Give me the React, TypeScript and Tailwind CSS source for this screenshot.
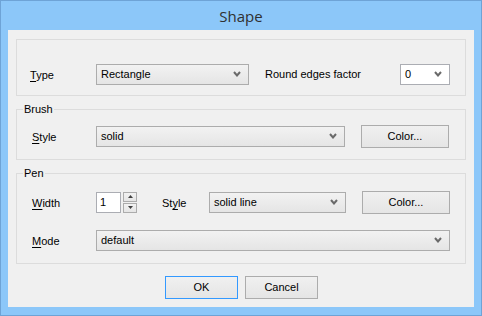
import React from 'react';

const font = { fontFamily: '"Liberation Sans", Arial, sans-serif' };

const Chevron = () => (
  <svg width="8" height="6" viewBox="0 0 8 6" className="shrink-0">
    <polyline points="1,1 4,4.5 7,1" fill="none" stroke="#6a6a6a" strokeWidth="2" />
  </svg>
);

const Combo = ({ value, width, white = false }: { value: string; width: string; white?: boolean }) => (
  <div
    className={`${width} h-[21px] flex items-center justify-between pl-[4px] pr-[7px] border text-[11px] text-black ${
      white ? 'bg-white border-[#abadb3]' : 'bg-gradient-to-b from-[#f2f2f2] to-[#e5e5e5] border-[#acacac]'
    }`}
  >
    <span>{value}</span>
    <Chevron />
  </div>
);

const Button = ({ label, width, def = false }: { label: string; width: string; def?: boolean }) => (
  <div
    className={`${width} h-[23px] flex items-center justify-center border text-[11px] text-black bg-gradient-to-b from-[#f0f0f0] to-[#e5e5e5] ${
      def ? 'border-[#3399ff]' : 'border-[#acacac]'
    }`}
  >
    {label}
  </div>
);

const Label = ({ pre = '', u, post }: { pre?: string; u: string; post: string }) => (
  <span className="text-[11px] text-black">
    {pre}
    <span className="underline underline-offset-2">{u}</span>
    {post}
  </span>
);

const Group = ({ title, height, children }: { title?: string; height: string; children: React.ReactNode }) => (
  <div className={`relative mx-[8px] ${height} border border-[#dcdcdc]`}>
    {title && (
      <span className="absolute -top-[8px] left-[6px] px-[1px] bg-[#f0f0f0] text-[11px] leading-[14px] text-black">
        {title}
      </span>
    )}
    {children}
  </div>
);

export default function App() {
  return (
    <div className="w-[482px] h-[316px] bg-[#8cc7f9] border border-[#6ea3d6] flex flex-col" style={font}>
      <div className="h-[29px] flex items-center justify-center pt-[1px]">
        <span className="text-[15px] text-[#303030]" style={{ fontFamily: '"Open Sans", "Noto Sans", sans-serif' }}>
          Shape
        </span>
      </div>
      <div className="mx-[7px] h-[277px] bg-[#f0f0f0] flex flex-col pt-[9px]">
        {/* Type */}
        <Group height="h-[57px]">
          <div className="flex items-center pt-[22px]">
            <div className="w-[79px] pl-[13px]">
              <Label u="T" post="ype" />
            </div>
            <Combo value="Rectangle" width="w-[153px]" />
            <span className="ml-[16px] w-[135px] text-[11px] text-black">Round edges factor</span>
            <Combo value="0" width="w-[50px]" white />
          </div>
        </Group>

        {/* Brush */}
        <div className="mt-[13px]">
          <Group title="Brush" height="h-[51px]">
            <div className="flex items-center pt-[14px]">
              <div className="w-[79px] pl-[15px]">
                <Label u="S" post="tyle" />
              </div>
              <Combo value="solid" width="w-[249px]" />
              <div className="ml-[16px]">
                <Button label="Color..." width="w-[88px]" />
              </div>
            </div>
          </Group>
        </div>

        {/* Pen */}
        <div className="mt-[13px]">
          <Group title="Pen" height="h-[91px]">
            <div className="flex items-center pt-[16px]">
              <div className="w-[79px] pl-[15px]">
                <Label u="W" post="idth" />
              </div>
              <div className="w-[25px] h-[21px] bg-white border border-[#abadb3] flex items-center pl-[3px] text-[11px] text-black">
                1
              </div>
              <div className="ml-[2px] w-[14px] h-[21px] flex flex-col gap-[1px]">
                <div className="h-[10px] border border-[#acacac] bg-gradient-to-b from-[#f2f2f2] to-[#e5e5e5] flex items-center justify-center">
                  <svg width="5" height="3" viewBox="0 0 5 3">
                    <polygon points="0,3 2.5,0 5,3" fill="#404040" />
                  </svg>
                </div>
                <div className="h-[10px] border border-[#acacac] bg-gradient-to-b from-[#f2f2f2] to-[#e5e5e5] flex items-center justify-center">
                  <svg width="5" height="3" viewBox="0 0 5 3">
                    <polygon points="0,0 2.5,3 5,0" fill="#404040" />
                  </svg>
                </div>
              </div>
              <div className="ml-[25px] w-[47px]">
                <Label pre="St" u="y" post="le" />
              </div>
              <Combo value="solid line" width="w-[137px]" />
              <div className="ml-[16px]">
                <Button label="Color..." width="w-[88px]" />
              </div>
            </div>
            <div className="flex items-center mt-[14px]">
              <div className="w-[79px] pl-[15px]">
                <Label u="M" post="ode" />
              </div>
              <Combo value="default" width="w-[354px]" />
            </div>
          </Group>
        </div>

        <div className="flex justify-center gap-[7px] mt-[12px] pl-[1px]">
          <Button label="OK" width="w-[73px]" def />
          <Button label="Cancel" width="w-[73px]" />
        </div>
      </div>
    </div>
  );
}
